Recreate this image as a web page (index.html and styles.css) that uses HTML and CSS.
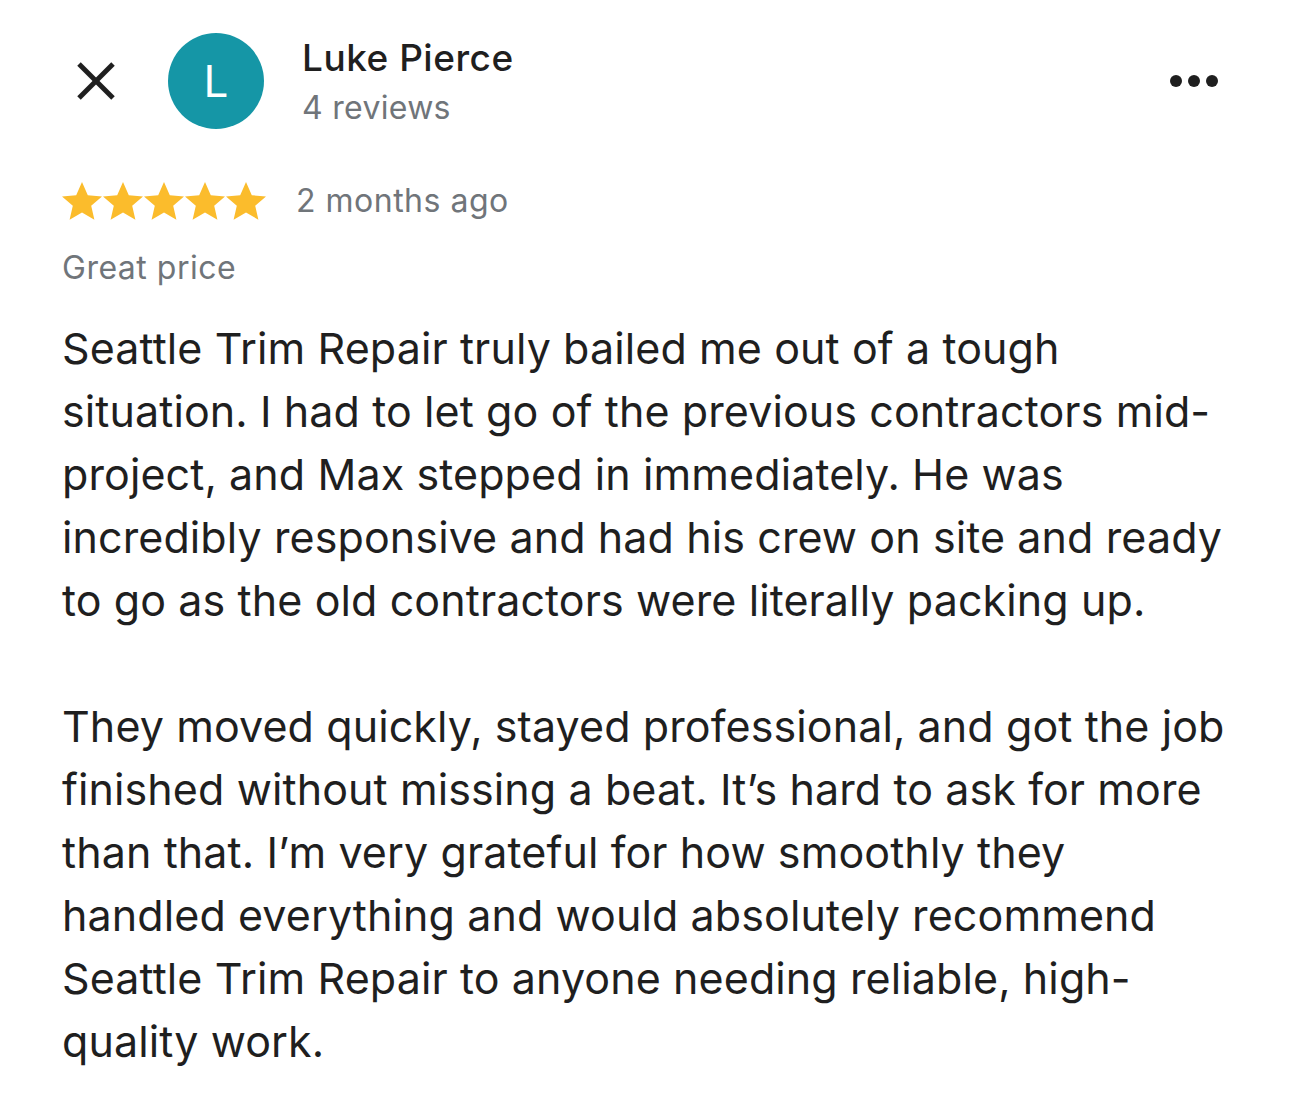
FILE: index.html
```html
<!DOCTYPE html>
<html lang="en">
<head>
  <meta charset="UTF-8" />
  <meta name="viewport" content="width=device-width, initial-scale=1.0"/>
  <title>Review – Luke Pierce</title>
  <link rel="stylesheet" href="styles.css">
</head>
<body>

  <div class="review">
    <header class="review-header">
      <a href="#" class="btn-close" title="Close">
        <svg viewBox="0 0 42 42">
          <line x1="4" y1="4" x2="38" y2="38" />
          <line x1="38" y1="4" x2="4" y2="38" />
        </svg>
      </a>
      <div class="avatar">L</div>
      <div class="author">
        <div class="author-name">Luke Pierce</div>
        <div class="author-meta">4 reviews</div>
      </div>
      <a href="#" class="btn-more" title="More">
        <span></span><span></span><span></span>
      </a>
    </header>

    <div class="rating-row">
      <div class="stars">
        <svg viewBox="2 2.2 20 19"><path d="M12 2.2l2.9 6.6 7.1.6-5.4 4.7 1.6 7-6.2-3.7-6.2 3.7 1.6-7L2 9.4l7.1-.6z"/></svg>
        <svg viewBox="2 2.2 20 19"><path d="M12 2.2l2.9 6.6 7.1.6-5.4 4.7 1.6 7-6.2-3.7-6.2 3.7 1.6-7L2 9.4l7.1-.6z"/></svg>
        <svg viewBox="2 2.2 20 19"><path d="M12 2.2l2.9 6.6 7.1.6-5.4 4.7 1.6 7-6.2-3.7-6.2 3.7 1.6-7L2 9.4l7.1-.6z"/></svg>
        <svg viewBox="2 2.2 20 19"><path d="M12 2.2l2.9 6.6 7.1.6-5.4 4.7 1.6 7-6.2-3.7-6.2 3.7 1.6-7L2 9.4l7.1-.6z"/></svg>
        <svg viewBox="2 2.2 20 19"><path d="M12 2.2l2.9 6.6 7.1.6-5.4 4.7 1.6 7-6.2-3.7-6.2 3.7 1.6-7L2 9.4l7.1-.6z"/></svg>
      </div>
      <span class="date">2 months ago</span>
    </div>

    <p class="tag">Great price</p>

    <div class="review-text">
      <p>Seattle Trim Repair truly bailed me out of a tough situation. I had to let go of the previous contractors mid-project, and Max stepped in immediately. He was incredibly responsive and had his crew on site and ready to go as the old contractors were literally packing up.</p>
      <p>They moved quickly, stayed professional, and got the job finished without missing a beat. It’s hard to ask for more than that. I’m very grateful for how smoothly they handled everything and would absolutely recommend Seattle Trim Repair to anyone needing reliable, high-quality work.</p>
    </div>
  </div>

</body>
</html>
```

FILE: styles.css
```css
:root {
  --text: #1f1f1f;
  --muted: #70757a;
  --teal: #1596a6;
  --star: #fbbc2c;
}

body {
  font-family: Inter, 'Noto Sans', Arial, sans-serif;
  background: #fff;
  margin: 0;
  color: var(--text);
}

.review {
  padding: 33px 55px 0 62px;
  max-width: 1173px;
}

.review-header {
  display: flex;
  align-items: center;
}

.btn-close {
  display: flex;
  margin-left: 13px;
}

.btn-close svg {
  width: 42px;
  height: 42px;
  stroke: var(--text);
  stroke-width: 5;
}

.avatar {
  width: 96px;
  height: 96px;
  margin-left: 51px;
  border-radius: 50%;
  background: var(--teal);
  color: #fff;
  font-size: 44px;
  display: flex;
  align-items: center;
  justify-content: center;
}

.author {
  align-self: flex-start;
  margin-left: 38px;
  margin-top: 1px;
}

.author-name {
  font-size: 37px;
  font-weight: 500;
  letter-spacing: 0.5px;
  line-height: 48px;
}

.author-meta {
  font-size: 32px;
  color: var(--muted);
  letter-spacing: 0.3px;
  line-height: 40px;
  margin-top: 6px;
}

.btn-more {
  margin-left: auto;
  margin-right: 17px;
  display: flex;
  gap: 6px;
}

.btn-more span {
  width: 12px;
  height: 12px;
  border-radius: 50%;
  background: var(--text);
}

.rating-row {
  display: flex;
  align-items: center;
  margin-top: 52px;
}

.stars {
  display: flex;
  gap: 1px;
}

.stars svg {
  width: 40px;
  height: 38px;
  fill: var(--star);
}

.date {
  font-size: 32px;
  color: var(--muted);
  letter-spacing: 0.5px;
  margin-left: 30px;
}

.tag {
  font-size: 32px;
  color: var(--muted);
  letter-spacing: 0.5px;
  margin: 28px 0 0;
}

.review-text {
  margin-top: 30px;
}

.review-text p {
  font-size: 43px;
  letter-spacing: 0.1px;
  line-height: 63px;
  margin: 0 0 63px;
}
```
